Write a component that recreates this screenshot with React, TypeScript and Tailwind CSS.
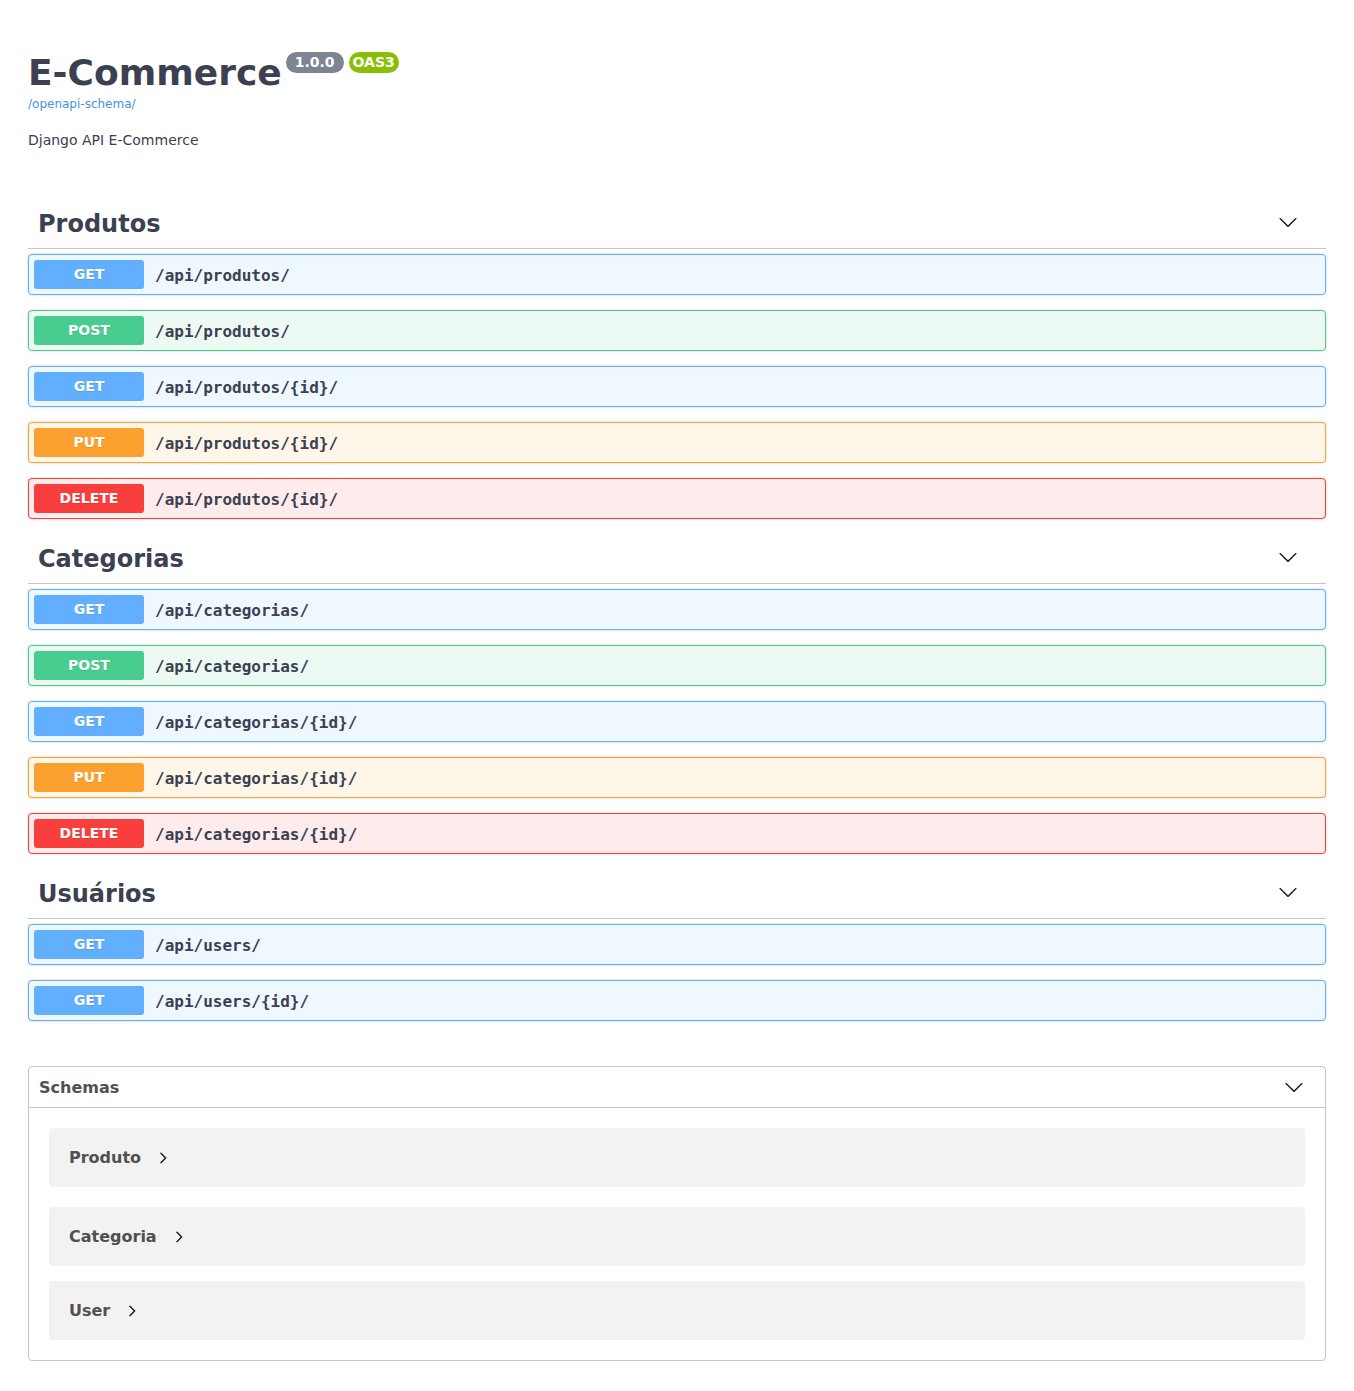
import React from "react";

type Method = "GET" | "POST" | "PUT" | "DELETE";

const methodStyles: Record<Method, { row: string; badge: string }> = {
  GET: { row: "bg-[#eff7ff] border-[#61affe]", badge: "bg-[#61affe]" },
  POST: { row: "bg-[#edfaf4] border-[#49cc90]", badge: "bg-[#49cc90]" },
  PUT: { row: "bg-[#fff6ea] border-[#fca130]", badge: "bg-[#fca130]" },
  DELETE: { row: "bg-[#feecec] border-[#f93e3e]", badge: "bg-[#f93e3e]" },
};

const sections: { name: string; ops: { method: Method; path: string }[] }[] = [
  {
    name: "Produtos",
    ops: [
      { method: "GET", path: "/api/produtos/" },
      { method: "POST", path: "/api/produtos/" },
      { method: "GET", path: "/api/produtos/{id}/" },
      { method: "PUT", path: "/api/produtos/{id}/" },
      { method: "DELETE", path: "/api/produtos/{id}/" },
    ],
  },
  {
    name: "Categorias",
    ops: [
      { method: "GET", path: "/api/categorias/" },
      { method: "POST", path: "/api/categorias/" },
      { method: "GET", path: "/api/categorias/{id}/" },
      { method: "PUT", path: "/api/categorias/{id}/" },
      { method: "DELETE", path: "/api/categorias/{id}/" },
    ],
  },
  {
    name: "Usuários",
    ops: [
      { method: "GET", path: "/api/users/" },
      { method: "GET", path: "/api/users/{id}/" },
    ],
  },
];

function ArrowDown({ className }: { className?: string }) {
  return (
    <svg viewBox="0 0 20 20" className={className} aria-hidden>
      <path
        fill="currentColor"
        d="M17.418 6.109c.272-.268.709-.268.979 0s.271.701 0 .969l-7.908 7.83c-.27.268-.707.268-.979 0l-7.908-7.83c-.27-.268-.27-.701 0-.969.271-.268.709-.268.979 0L10 13.25l7.418-7.141z"
      />
    </svg>
  );
}

function ArrowRight({ className }: { className?: string }) {
  return (
    <svg viewBox="0 0 20 20" className={className} aria-hidden>
      <path
        fill="currentColor"
        stroke="currentColor"
        strokeWidth="1.2"
        d="M13.25 10L6.109 2.58c-.268-.27-.268-.707 0-.979.268-.27.701-.27.969 0l7.83 7.908c.268.271.268.709 0 .979l-7.83 7.908c-.268.271-.701.27-.969 0-.268-.269-.268-.707 0-.979L13.25 10z"
      />
    </svg>
  );
}

function OpRow({ method, path }: { method: Method; path: string }) {
  const s = methodStyles[method];
  return (
    <div
      className={`mb-[15px] flex h-[41px] items-center rounded-[4px] border p-[5px] shadow-[0_0_3px_rgba(0,0,0,0.19)] ${s.row}`}
    >
      <span
        className={`flex h-[29px] w-[110px] items-center justify-center rounded-[3px] text-[14px] font-bold text-white [text-shadow:0_1px_0_rgba(0,0,0,0.1)] ${s.badge}`}
      >
        {method}
      </span>
      <span className="pl-[11px] pt-[2px] font-['DejaVu_Sans_Mono',monospace] text-[16px] font-semibold text-[#3b4151]">
        {path}
      </span>
    </div>
  );
}

export default function App() {
  return (
    <div className="min-h-screen bg-white font-['DejaVu_Sans',sans-serif] text-[#3b4151]">
      <div className="px-[28px] pt-[52px] pb-[30px]">
        <div className="flex items-start">
          <h2 className="text-[36px] font-bold leading-[42px] text-[#3b4151]">
            E-Commerce
          </h2>
          <span className="ml-[4px] rounded-full bg-[#7d8492] px-[9px] text-[14px] font-bold leading-[21px] text-white">
            1.0.0
          </span>
          <span className="ml-[5px] rounded-full bg-[#89bf04] px-[4px] text-[14px] font-bold leading-[21px] text-white">
            OAS3
          </span>
        </div>
        <a className="mt-[2px] block text-[12px] leading-[16px] text-[#4990e2]">
          /openapi-schema/
        </a>
        <p className="mt-[20px] text-[14px] leading-[17px] text-[#3b4151]">
          Django API E-Commerce
        </p>

        <div className="mt-[50px]">
          {sections.map((sec) => (
            <div key={sec.name}>
              <div className="mb-[5px] flex h-[50px] items-center justify-between border-b border-[rgba(59,65,81,0.3)] pl-[10px] pr-[28px]">
                <h3 className="pt-[1px] text-[24px] font-bold leading-[29px] text-[#3b4151]">
                  {sec.name}
                </h3>
                <ArrowDown className="mb-[4px] h-[20px] w-[20px] text-[#222]" />
              </div>
              {sec.ops.map((op, i) => (
                <OpRow key={i} method={op.method} path={op.path} />
              ))}
            </div>
          ))}
        </div>

        <div className="mt-[45px] rounded-[4px] border border-[rgba(59,65,81,0.3)]">
          <div className="flex h-[41px] items-center justify-between border-b border-[rgba(59,65,81,0.3)] pl-[10px] pr-[21px]">
            <h4 className="pt-[1px] text-[16px] font-bold text-[#505050]">Schemas</h4>
            <ArrowDown className="h-[20px] w-[20px] text-[#222]" />
          </div>
          <div className="px-[20px] pt-[20px] pb-[20px]">
            {[
              { name: "Produto", mb: "mb-[20px]" },
              { name: "Categoria", mb: "mb-[15px]" },
              { name: "User", mb: "" },
            ].map((m) => (
              <div
                key={m.name}
                className={`flex h-[59px] items-center rounded-[4px] bg-[#f2f2f2] px-[20px] ${m.mb}`}
              >
                <span className="text-[16px] font-bold text-[#505050]">
                  {m.name}
                </span>
                <ArrowRight className="ml-[16px] h-[12px] w-[12px] text-[#111]" />
              </div>
            ))}
          </div>
        </div>
      </div>
    </div>
  );
}
